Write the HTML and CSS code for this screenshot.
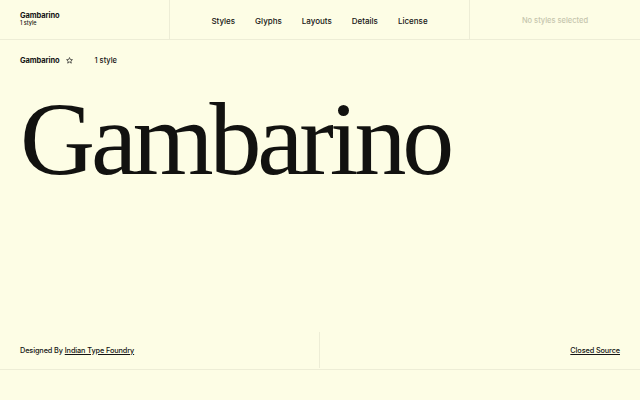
FILE: index.html
```html
<!DOCTYPE html>
<html>
<head>
<meta charset="utf-8">
<link rel="stylesheet" href="styles.css">
</head>
<body>
<div class="page">
  <header class="topbar">
    <div class="brand">
      <div class="brand-name">Gambarino</div>
      <div class="brand-sub">1 style</div>
    </div>
    <nav class="nav">
      <span>Styles</span>
      <span>Glyphs</span>
      <span>Layouts</span>
      <span>Details</span>
      <span>License</span>
    </nav>
    <div class="selection">No styles selected</div>
  </header>
  <div class="info">
    <span class="info-name">Gambarino</span>
    <svg class="star" viewBox="0 0 10 10" width="7" height="7"><path d="M5 0.8 L6.2 3.6 L9.2 3.8 L6.9 5.8 L7.6 8.8 L5 7.2 L2.4 8.8 L3.1 5.8 L0.8 3.8 L3.8 3.6 Z" fill="none" stroke="#222" stroke-width="1" stroke-linejoin="round"/></svg>
    <span class="info-count">1 style</span>
  </div>
  <div class="hero">
    <div class="specimen">Gambarino</div>
  </div>
  <footer class="footer">
    <div class="foot-left">Designed By&nbsp;<a class="link">Indian Type Foundry</a></div>
    <div class="foot-right"><a class="link">Closed Source</a></div>
  </footer>
</div>
</body>
</html>
```
FILE: styles.css
```css
html, body {
  margin: 0;
  padding: 0;
  background: #fdfde5;
}
body {
  font-family: Inter, "Liberation Sans", sans-serif;
  color: #141414;
  width: 640px;
  height: 400px;
  overflow: hidden;
}
.topbar {
  display: grid;
  grid-template-columns: 170px 300px 170px;
  height: 39px;
  border-bottom: 1px solid #ededd6;
}
.brand {
  border-right: 1px solid #ededd6;
  padding: 11px 0 0 20px;
}
.brand-name {
  font-size: 7.5px;
  font-weight: 700;
  line-height: 9px;
  letter-spacing: -0.1px;
}
.brand-sub {
  font-size: 5.5px;
  font-weight: 500;
  line-height: 7px;
}
.nav {
  display: flex;
  justify-content: center;
  align-items: center;
  gap: 20px;
  font-size: 8px;
  font-weight: 500;
  border-right: 1px solid #ededd6;
  padding-top: 2px;
}
.selection {
  display: flex;
  justify-content: center;
  align-items: center;
  font-size: 7.5px;
  font-weight: 500;
  color: #c6c6ae;
  padding-top: 2px;
}
.info {
  display: flex;
  align-items: center;
  height: 40px;
  padding-left: 20px;
  font-size: 7.5px;
}
.info-name {
  font-weight: 700;
  letter-spacing: -0.1px;
}
.star {
  margin-left: 6px;
}
.info-count {
  margin-left: 22px;
  font-weight: 500;
}
.hero {
  height: 252px;
  padding-left: 20px;
  box-sizing: border-box;
  padding-top: 7px;
}
.specimen {
  font-family: "Liberation Serif", "Times New Roman", serif;
  font-size: 104px;
  line-height: 1;
  letter-spacing: -4.2px;
  color: #121210;
}
.footer {
  display: grid;
  grid-template-columns: 320px 320px;
  height: 37px;
  border-bottom: 1px solid #ededd6;
  font-size: 7.3px;
  font-weight: 500;
  letter-spacing: -0.1px;
}
.foot-left {
  display: flex;
  align-items: center;
  padding-left: 20px;
  border-right: 1px solid #ededd6;
  margin-bottom: 1px;
}
.foot-right {
  display: flex;
  align-items: center;
  justify-content: flex-end;
  padding-right: 20px;
}
.link {
  text-decoration: underline;
  text-underline-offset: 1px;
}
```
